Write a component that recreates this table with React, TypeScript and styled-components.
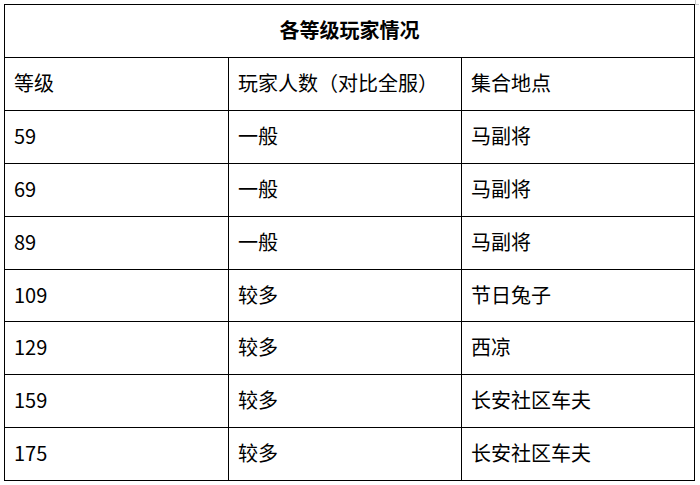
import React from "react";
import styled, { createGlobalStyle } from "styled-components";

type TRow = {
  level: string;
  players: string;
  place: string;
};

type TCell = {
  head?: boolean;
};

const rows: TRow[] = [
  { level: "59", players: "一般", place: "马副将" },
  { level: "69", players: "一般", place: "马副将" },
  { level: "89", players: "一般", place: "马副将" },
  { level: "109", players: "较多", place: "节日兔子" },
  { level: "129", players: "较多", place: "西凉" },
  { level: "159", players: "较多", place: "长安社区车夫" },
  { level: "175", players: "较多", place: "长安社区车夫" },
];

const GlobalStyle = createGlobalStyle`
  html, body {
    margin: 0;
    padding: 0;
    background: #ffffff;
  }

  body {
    font-family: "Noto Sans CJK SC", "Noto Sans", sans-serif;
    color: #000000;
  }
`;

const Page = styled.div`
  position: relative;
  width: 700px;
  height: 485px;
  padding: 4px 0 0 4px;
  box-sizing: border-box;
`;

const CornerMark = styled.span`
  position: absolute;
  top: 0;
  right: 1px;
  width: 3px;
  height: 4px;
  border-left: 1px solid #c8c8c8;
  border-bottom: 1px solid #c8c8c8;
`;

const Table = styled.div`
  display: grid;
  grid-template-columns: 224px 233px 233px;
  grid-template-rows: 53px 53px 53px 53px 53px 52px 53px 53px 53px;
  width: 691px;
  border-top: 1px solid #000;
  border-left: 1px solid #000;
  box-sizing: border-box;
`;

const Title = styled.div`
  grid-column: 1 / -1;
  display: flex;
  align-items: center;
  justify-content: center;
  padding-bottom: 3px;
  font-size: 20px;
  font-weight: 700;
  border-right: 1px solid #000;
  border-bottom: 1px solid #000;
  box-sizing: border-box;
`;

const Cell = styled.div<TCell>`
  display: flex;
  align-items: center;
  padding: 0 0 3px 9px;
  font-size: 20px;
  font-weight: 400;
  white-space: nowrap;
  border-right: 1px solid #000;
  border-bottom: 1px solid #000;
  box-sizing: border-box;
`;

const App = () => {
  return (
    <>
      <GlobalStyle />
      <Page>
        <CornerMark />
        <Table>
          <Title>各等级玩家情况</Title>
          <Cell head>等级</Cell>
          <Cell head>玩家人数（对比全服）</Cell>
          <Cell head>集合地点</Cell>
          {rows.map((row) => (
            <React.Fragment key={row.level}>
              <Cell>{row.level}</Cell>
              <Cell>{row.players}</Cell>
              <Cell>{row.place}</Cell>
            </React.Fragment>
          ))}
        </Table>
      </Page>
    </>
  );
};

export default App;
